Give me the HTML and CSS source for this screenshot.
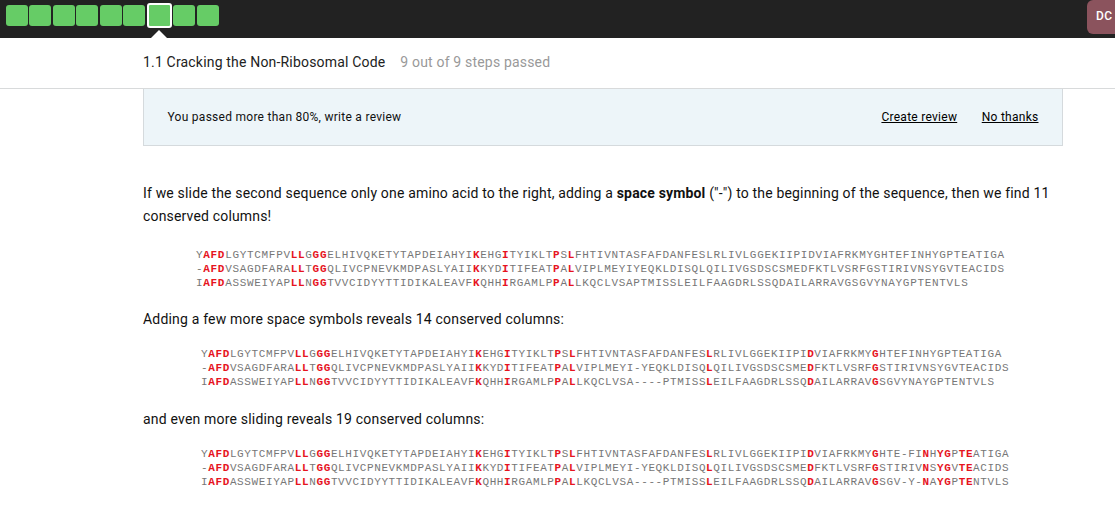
FILE: index.html
```
<!DOCTYPE html>
<html lang="en">
<head>
<meta charset="utf-8">
<title>Cracking the Non-Ribosomal Code</title>
<link rel="stylesheet" href="styles.css">
</head>
<body>
<header class="topbar">
  <nav class="steps">
    <i class="step"></i><i class="step"></i><i class="step"></i><i class="step"></i><i class="step"></i><i class="step"></i><i class="step current"></i><i class="step"></i><i class="step"></i>
  </nav>
  <div class="avatar">DC</div>
</header>
<div class="lesson">
  <span class="title">1.1 Cracking the Non-Ribosomal Code</span>
  <span class="progress">9 out of 9 steps passed</span>
</div>
<main class="content">
  <section class="review">
    <span class="message">You passed more than 80%, write a review</span>
    <a class="create">Create review</a>
    <a class="decline">No thanks</a>
  </section>
  <p class="intro">If we slide the second sequence only one amino acid to the right, adding a <strong>space symbol</strong> ("-") to the beginning of the sequence, then we find 11 conserved columns!</p>
  <pre class="alignment first">Y<b>AFD</b>LGYTCMFPV<b>LL</b>G<b>GG</b>ELHIVQKETYTAPDEIAHYI<b>K</b>EHG<b>I</b>TYIKLT<b>P</b>S<b>L</b>FHTIVNTASFAFDANFESLRLIVLGGEKIIPIDVIAFRKMYGHTEFINHYGPTEATIGA
-<b>AFD</b>VSAGDFARA<b>LL</b>T<b>GG</b>QLIVCPNEVKMDPASLYAII<b>K</b>KYD<b>I</b>TIFEAT<b>P</b>A<b>L</b>VIPLMEYIYEQKLDISQLQILIVGSDSCSMEDFKTLVSRFGSTIRIVNSYGVTEACIDS
I<b>AFD</b>ASSWEIYAP<b>LL</b>N<b>GG</b>TVVCIDYYTTIDIKALEAVF<b>K</b>QHH<b>I</b>RGAMLP<b>P</b>A<b>L</b>LKQCLVSAPTMISSLEILFAAGDRLSSQDAILARRAVGSGVYNAYGPTENTVLS</pre>
  <p class="caption">Adding a few more space symbols reveals 14 conserved columns:</p>
  <pre class="alignment">Y<b>AFD</b>LGYTCMFPV<b>LL</b>G<b>GG</b>ELHIVQKETYTAPDEIAHYI<b>K</b>EHG<b>I</b>TYIKLT<b>P</b>S<b>L</b>FHTIVNTASFAFDANFES<b>L</b>RLIVLGGEKIIPI<b>D</b>VIAFRKMY<b>G</b>HTEFINHYGPTEATIGA
-<b>AFD</b>VSAGDFARA<b>LL</b>T<b>GG</b>QLIVCPNEVKMDPASLYAII<b>K</b>KYD<b>I</b>TIFEAT<b>P</b>A<b>L</b>VIPLMEYI-YEQKLDISQ<b>L</b>QILIVGSDSCSME<b>D</b>FKTLVSRF<b>G</b>STIRIVNSYGVTEACIDS
I<b>AFD</b>ASSWEIYAP<b>LL</b>N<b>GG</b>TVVCIDYYTTIDIKALEAVF<b>K</b>QHH<b>I</b>RGAMLP<b>P</b>A<b>L</b>LKQCLVSA----PTMISS<b>L</b>EILFAAGDRLSSQ<b>D</b>AILARRAV<b>G</b>SGVYNAYGPTENTVLS</pre>
  <p class="caption last">and even more sliding reveals 19 conserved columns:</p>
  <pre class="alignment">Y<b>AFD</b>LGYTCMFPV<b>LL</b>G<b>GG</b>ELHIVQKETYTAPDEIAHYI<b>K</b>EHG<b>I</b>TYIKLT<b>P</b>S<b>L</b>FHTIVNTASFAFDANFES<b>L</b>RLIVLGGEKIIPI<b>D</b>VIAFRKMY<b>G</b>HTE-FI<b>N</b>H<b>YG</b>P<b>TE</b>ATIGA
-<b>AFD</b>VSAGDFARA<b>LL</b>T<b>GG</b>QLIVCPNEVKMDPASLYAII<b>K</b>KYD<b>I</b>TIFEAT<b>P</b>A<b>L</b>VIPLMEYI-YEQKLDISQ<b>L</b>QILIVGSDSCSME<b>D</b>FKTLVSRF<b>G</b>STIRIV<b>N</b>S<b>YG</b>V<b>TE</b>ACIDS
I<b>AFD</b>ASSWEIYAP<b>LL</b>N<b>GG</b>TVVCIDYYTTIDIKALEAVF<b>K</b>QHH<b>I</b>RGAMLP<b>P</b>A<b>L</b>LKQCLVSA----PTMISS<b>L</b>EILFAAGDRLSSQ<b>D</b>AILARRAV<b>G</b>SGV-Y-<b>N</b>A<b>YG</b>P<b>TE</b>NTVLS</pre>
</main>
</body>
</html>
```
FILE: styles.css
```
* { box-sizing: border-box; }
body {
  margin: 0;
  background: #fff;
  color: #222;
  font-family: Roboto, "Liberation Sans", sans-serif;
  overflow: hidden;
}
.topbar {
  display: flex;
  justify-content: space-between;
  height: 38px;
  background: #222;
}
.steps { display: flex; gap: 1.4px; padding: 5px 0 0 6px; }
.step {
  width: 22px;
  height: 21px;
  border-radius: 3px;
  background: #6c6;
}
.step.current {
  position: relative;
  width: 25px;
  height: 25px;
  margin: -2px 0 0 0.5px;
  border: 2px solid #fff;
}
.step.current::after {
  content: "";
  position: absolute;
  left: 2px;
  top: 25px;
  border: 8px solid transparent;
  border-top: 0;
  border-bottom-color: #fff;
}
.avatar {
  width: 28px;
  height: 34px;
  padding-left: 9px;
  border-radius: 6px 0 0 6px;
  background: #8b535d;
  color: #fff;
  font-size: 12px;
  font-weight: 500;
  letter-spacing: 0.5px;
  line-height: 32px;
}
.lesson {
  display: flex;
  gap: 15px;
  height: 51px;
  padding-left: 143px;
  border-bottom: 1px solid #d8dadb;
  font-size: 14px;
  letter-spacing: 0.18px;
  line-height: 48px;
}
.progress { color: #999; }
.content { width: 920px; margin-left: 143px; }
.review {
  display: flex;
  height: 57px;
  padding: 1px 23.5px;
  border: 1px solid #d5dadd;
  border-top: 0;
  background: #edf5f9;
  color: #111;
  font-size: 12px;
  letter-spacing: 0.27px;
  line-height: 55px;
}
.create { margin-left: auto; }
.decline { margin-left: 24.5px; }
.create, .decline { color: #000; text-decoration: underline; }
p { margin: 0; color: #111; font-size: 14px; letter-spacing: 0.19px; line-height: 23px; }
.intro { margin-top: 36px; letter-spacing: 0.17px; }
.caption { margin-top: 18px; }
.caption.last { margin-top: 19px; }
.alignment {
  margin: 16px 0 0 58px;
  color: #777;
  font: 11px/14px "Courier New", "Liberation Mono", monospace;
  letter-spacing: 0.613px;
}
.alignment b { color: #e6141e; }
.alignment.first {
  margin: 20px 0 0 53px;
  letter-spacing: 0.685px;
}
```
